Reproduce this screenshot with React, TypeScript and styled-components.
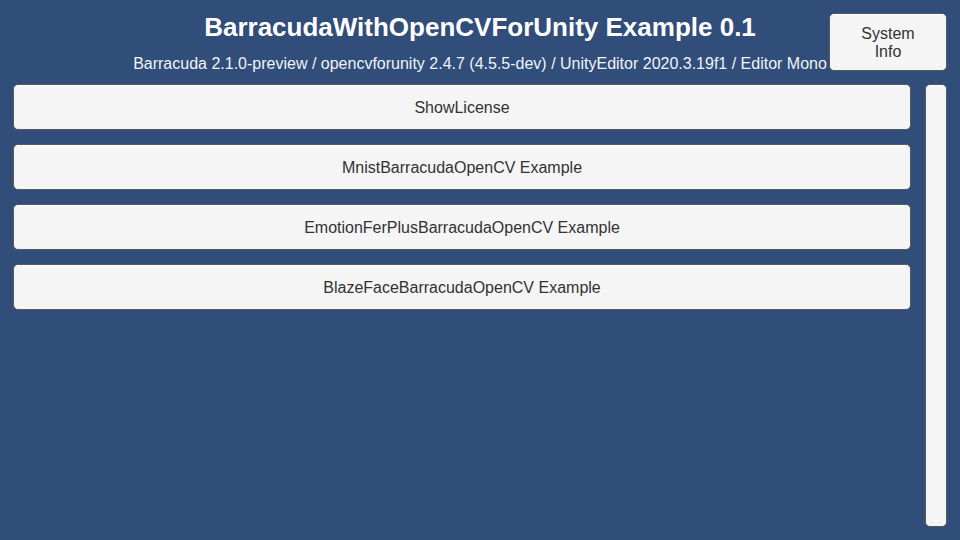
import React from "react";
import styled, { createGlobalStyle } from "styled-components";

const GlobalStyle = createGlobalStyle`
  * { box-sizing: border-box; }
  body {
    margin: 0;
    background: #314d79;
    font-family: "Liberation Sans", Arial, sans-serif;
  }
`;

const Page = styled.main`
  display: flex;
  flex-direction: column;
  gap: 11px;
  min-height: 100vh;
  padding: 13px;
`;

const Header = styled.header`
  display: grid;
  grid-template-columns: minmax(0, 1fr) 118px;
  align-items: start;
`;

const Titles = styled.div`
  padding-left: 118px;
  color: #fff;
  text-align: center;
`;

const Title = styled.h1`
  margin: 0;
  font-size: 26px;
  line-height: 28px;
`;

const Versions = styled.p`
  margin: 14px 0 0;
  color: #f0f3f8;
  font-size: 16px;
  line-height: 18px;
`;

const Button = styled.button`
  padding: 2px 0 0;
  border: 1px solid #58585c;
  border-radius: 5px;
  background: #f5f5f5;
  color: #323232;
  font-family: inherit;
  font-size: 16px;
  line-height: 18px;
  box-shadow: inset 0 1px 0 #fff;
  cursor: pointer;
`;

const InfoButton = styled(Button)`
  height: 58px;
  padding: 2px 24px 0;
`;

const Body = styled.div`
  display: flex;
  flex: 1;
  gap: 14px;
`;

const ExampleList = styled.nav`
  display: flex;
  flex: 1;
  flex-direction: column;
  gap: 14px;
`;

const ExampleButton = styled(Button)`
  height: 46px;
`;

const ScrollHandle = styled(Button)`
  width: 22px;
`;

const examples = [
  "ShowLicense",
  "MnistBarracudaOpenCV Example",
  "EmotionFerPlusBarracudaOpenCV Example",
  "BlazeFaceBarracudaOpenCV Example",
];

export default function App() {
  return (
    <>
      <GlobalStyle />
      <Page>
        <Header>
          <Titles>
            <Title>BarracudaWithOpenCVForUnity Example 0.1</Title>
            <Versions>
              Barracuda 2.1.0-preview / opencvforunity 2.4.7 (4.5.5-dev) / UnityEditor 2020.3.19f1 / Editor Mono
            </Versions>
          </Titles>
          <InfoButton type="button">System Info</InfoButton>
        </Header>
        <Body>
          <ExampleList aria-label="Examples">
            {examples.map((name) => (
              <ExampleButton key={name} type="button">{name}</ExampleButton>
            ))}
          </ExampleList>
          <ScrollHandle type="button" aria-label="Scroll examples" />
        </Body>
      </Page>
    </>
  );
}
